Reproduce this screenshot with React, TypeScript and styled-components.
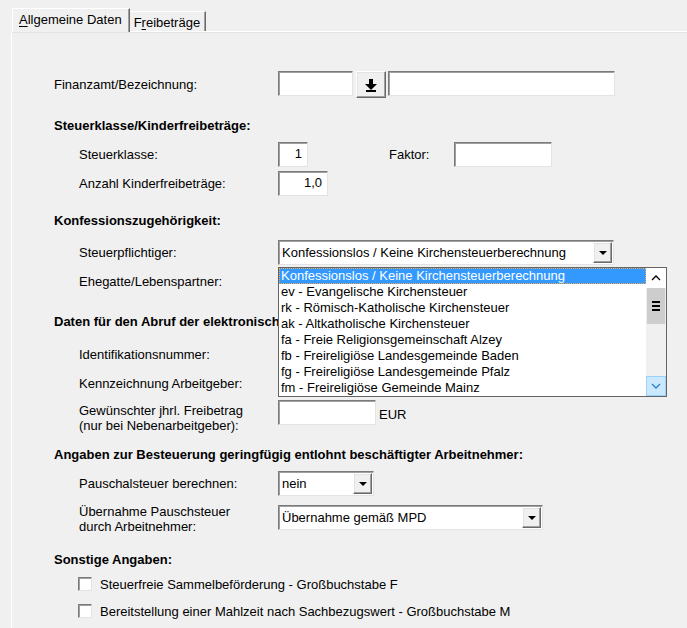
import React from 'react';
import styled, {createGlobalStyle, css} from 'styled-components';

const LABEL_COLUMN_WIDTH = 224;

const KONFESSIONEN = [
  'Konfessionslos / Keine Kirchensteuerberechnung',
  'ev - Evangelische Kirchensteuer',
  'rk - Römisch-Katholische Kirchensteuer',
  'ak - Altkatholische Kirchensteuer',
  'fa - Freie Religionsgemeinschaft Alzey',
  'fb - Freireligiöse Landesgemeinde Baden',
  'fg - Freireligiöse Landesgemeinde Pfalz',
  'fm - Freireligiöse Gemeinde Mainz',
];

const DownloadIcon = () => (
  <svg width="12" height="14" viewBox="0 0 12 14">
    <rect x="4" y="1" width="4" height="5" fill="#000" />
    <polygon points="0,6 12,6 6,12" fill="#000" />
    <rect x="1" y="12" width="10" height="2" fill="#000" />
  </svg>
);

const Chevron = ({up, color}: {up?: boolean; color: string}) => (
  <svg width="10" height="6" viewBox="0 0 10 6">
    <polyline
      points={up ? '1,5 5,1 9,5' : '1,1 5,5 9,1'}
      fill="none"
      stroke={color}
      strokeWidth="1.3"
    />
  </svg>
);

const ComboBox = ({value, width}: {value: string; width: number}) => (
  <Combo $width={width}>
    <ComboText>{value}</ComboText>
    <ComboButton>
      <Triangle />
    </ComboButton>
  </Combo>
);

export default function App() {
  return (
    <Window>
      <GlobalStyle />
      <TabBar>
        <Tab $active>
          <u>A</u>llgemeine Daten
        </Tab>
        <Tab>
          F<u>r</u>eibeträge
        </Tab>
      </TabBar>

      <Pane>
        <Row $mt={39} $h={27}>
          <Label>Finanzamt/Bezeichnung:</Label>
          <Fields>
            <TextBox $width={75} />
            <IconButton>
              <DownloadIcon />
            </IconButton>
            <TextBox $width={227} />
          </Fields>
        </Row>

        <Heading $mt={20}>Steuerklasse/Kinderfreibeträge:</Heading>
        <Row $mt={8}>
          <Label $indent>Steuerklasse:</Label>
          <Fields>
            <TextBox $width={30}>1</TextBox>
            <InlineLabel>Faktor:</InlineLabel>
            <TextBox $width={98} />
          </Fields>
        </Row>
        <Row $mt={4}>
          <Label $indent>Anzahl Kinderfreibeträge:</Label>
          <Fields>
            <TextBox $width={50}>1,0</TextBox>
          </Fields>
        </Row>

        <Heading $mt={17}>Konfessionszugehörigkeit:</Heading>
        <Row $mt={11}>
          <Label $indent>Steuerpflichtiger:</Label>
          <Fields>
            <DropdownAnchor>
              <ComboBox value={KONFESSIONEN[0]} width={336} />
              <DropdownList>
                <Items>
                  {KONFESSIONEN.map((k, i) => (
                    <Item key={k} $selected={i === 0}>
                      {k}
                    </Item>
                  ))}
                </Items>
                <ScrollBar>
                  <ScrollArrow>
                    <Chevron up color="#000" />
                  </ScrollArrow>
                  <Thumb>
                    <Grip />
                    <Grip />
                    <Grip />
                  </Thumb>
                  <Track />
                  <ScrollArrow $hover>
                    <Chevron color="#2a7fd0" />
                  </ScrollArrow>
                </ScrollBar>
              </DropdownList>
            </DropdownAnchor>
          </Fields>
        </Row>
        <Row $mt={4}>
          <Label $indent>Ehegatte/Lebenspartner:</Label>
          <Fields>
            <ComboBox value="" width={336} />
          </Fields>
        </Row>

        <Heading $mt={20} $clip>
          Daten für den Abruf der elektronischen Lohnsteuerabzugsmerkmale:
        </Heading>
        <Row $mt={12}>
          <Label $indent>Identifikationsnummer:</Label>
          <Fields>
            <TextBox $width={120} />
          </Fields>
        </Row>
        <Row $mt={4}>
          <Label $indent>Kennzeichnung Arbeitgeber:</Label>
          <Fields>
            <ComboBox value="" width={265} />
          </Fields>
        </Row>
        <Row $mt={4} $h={31} $top>
          <Label $indent $twoLines>
            Gewünschter jhrl. Freibetrag
            <br />
            (nur bei Nebenarbeitgeber):
          </Label>
          <Fields>
            <TextBox $width={98} />
            <Unit>EUR</Unit>
          </Fields>
        </Row>

        <Heading $mt={16}>
          Angaben zur Besteuerung geringfügig entlohnt beschäftigter
          Arbeitnehmer:
        </Heading>
        <Row $mt={8}>
          <Label $indent>Pauschalsteuer berechnen:</Label>
          <Fields>
            <ComboBox value="nein" width={96} />
          </Fields>
        </Row>
        <Row $mt={5} $top>
          <Label $indent $twoLines>
            Übernahme Pauschsteuer
            <br />
            durch Arbeitnehmer:
          </Label>
          <Fields>
            <ComboBox value="Übernahme gemäß MPD" width={265} />
          </Fields>
        </Row>

        <Heading $mt={26}>Sonstige Angaben:</Heading>
        <CheckRow $mt={7}>
          <CheckBox />
          Steuerfreie Sammelbeförderung - Großbuchstabe F
        </CheckRow>
        <CheckRow $mt={9}>
          <CheckBox />
          Bereitstellung einer Mahlzeit nach Sachbezugswert - Großbuchstabe M
        </CheckRow>
      </Pane>
    </Window>
  );
}

const GlobalStyle = createGlobalStyle`
  body {
    margin: 0;
    background: #f0f0f0;
    font-family: "Liberation Sans", Arial, sans-serif;
    font-size: 13px;
    color: #000;
  }
`;

const sunken = css`
  box-sizing: border-box;
  background: #fff;
  border: 1px solid;
  border-color: #7a7a7a #e3e3e3 #e3e3e3 #7a7a7a;
  box-shadow: inset 1px 1px 0 #a0a0a0;
`;

const raised = css`
  box-sizing: border-box;
  background: #f0f0f0;
  border: 1px solid;
  border-color: #fff #696969 #696969 #fff;
  box-shadow: inset -1px -1px 0 #a0a0a0, inset 1px 1px 0 #e3e3e3;
`;

const Window = styled.div`
  width: 687px;
  height: 628px;
  overflow: hidden;
  display: flex;
  flex-direction: column;
`;

const TabBar = styled.div`
  height: 31px;
  display: flex;
  align-items: flex-end;
  padding-left: 12px;
  position: relative;
  z-index: 1;
`;

const Tab = styled.div<{$active?: boolean}>`
  box-sizing: border-box;
  display: flex;
  align-items: center;
  background: #f0f0f0;
  border-top: 1px solid #fff;
  border-right: 1px solid #696969;
  box-shadow: inset -1px 0 0 #a0a0a0;
  ${({$active}) =>
    $active
      ? css`
          height: 24px;
          margin-bottom: -1px;
          padding: 0 7px 2px 6px;
          border-left: 1px solid #fff;
        `
      : css`
          height: 20px;
          padding: 1px 5px 0 4px;
        `}
  u {
    text-decoration-thickness: 1px;
    text-underline-offset: 2px;
  }
`;

const Pane = styled.div`
  flex: 1;
  margin-left: 11px;
  border-left: 1px solid #fff;
  border-top: 1px solid #fff;
  box-shadow: inset 0 1px 0 #e3e3e3;
  padding-left: 42px;
  display: flex;
  flex-direction: column;
`;

const Row = styled.div<{$mt: number; $h?: number; $top?: boolean}>`
  margin-top: ${({$mt}) => $mt}px;
  height: ${({$h}) => $h ?? 25}px;
  display: grid;
  grid-template-columns: ${LABEL_COLUMN_WIDTH}px 1fr;
  align-items: ${({$top}) => ($top ? 'start' : 'center')};
`;

const Label = styled.div<{$indent?: boolean; $twoLines?: boolean}>`
  padding-left: ${({$indent}) => ($indent ? 25 : 0)}px;
  white-space: nowrap;
  line-height: 15px;
  ${({$twoLines}) =>
    $twoLines &&
    css`
      padding-top: 3px;
    `}
`;

const Fields = styled.div`
  display: flex;
  align-items: center;
  height: 100%;
`;

const Heading = styled.div<{$mt: number; $clip?: boolean}>`
  margin-top: ${({$mt}) => $mt}px;
  height: 16px;
  line-height: 16px;
  font-weight: bold;
  white-space: nowrap;
  ${({$clip}) =>
    $clip &&
    css`
      width: ${LABEL_COLUMN_WIDTH}px;
      overflow: hidden;
    `}
`;

const TextBox = styled.div<{$width: number}>`
  ${sunken};
  width: ${({$width}) => $width}px;
  height: 25px;
  line-height: 21px;
  text-align: right;
  padding-right: 5px;
  align-self: flex-start;
`;

const InlineLabel = styled.span`
  width: 65px;
  margin-left: 81px;
`;

const Unit = styled.span`
  margin-left: 3px;
  align-self: center;
  margin-top: -4px;
`;

const IconButton = styled.div`
  ${raised};
  width: 30px;
  height: 27px;
  margin: 0 2px 0 3px;
  display: flex;
  align-items: center;
  justify-content: center;
  padding-top: 1px;
`;

const Combo = styled.div<{$width: number}>`
  ${sunken};
  width: ${({$width}) => $width}px;
  height: 25px;
  display: flex;
  align-items: center;
  padding: 1px 1px 1px 3px;
`;

const ComboText = styled.div`
  flex: 1;
  white-space: nowrap;
  overflow: hidden;
`;

const ComboButton = styled.div`
  ${raised};
  width: 19px;
  height: 21px;
  display: flex;
  align-items: center;
  justify-content: center;
`;

const Triangle = styled.div`
  width: 0;
  height: 0;
  border-left: 4px solid transparent;
  border-right: 4px solid transparent;
  border-top: 4px solid #000;
  margin-top: 1px;
`;

const DropdownAnchor = styled.div`
  position: relative;
`;

const DropdownList = styled.div`
  position: absolute;
  top: 27px;
  left: 0;
  width: 389px;
  height: 130px;
  box-sizing: border-box;
  border: 1px solid #646464;
  background: #fff;
  display: flex;
  z-index: 2;
`;

const Items = styled.div`
  flex: 1;
  display: flex;
  flex-direction: column;
`;

const Item = styled.div<{$selected?: boolean}>`
  height: 16px;
  line-height: 16px;
  padding-left: 2px;
  white-space: nowrap;
  ${({$selected}) =>
    $selected &&
    css`
      background: #3399ff;
      color: #fff;
      outline: 1px dotted #f3a94a;
      outline-offset: -1px;
    `}
`;

const ScrollBar = styled.div`
  width: 20px;
  display: flex;
  flex-direction: column;
  background: #f0f0f0;
`;

const ScrollArrow = styled.div<{$hover?: boolean}>`
  box-sizing: border-box;
  height: 20px;
  display: flex;
  align-items: center;
  justify-content: center;
  background: ${({$hover}) => ($hover ? '#cce8ff' : '#fff')};
  border: 1px solid ${({$hover}) => ($hover ? '#99d1ff' : '#fff')};
`;

const Thumb = styled.div`
  height: 36px;
  margin: 0 1px;
  background: #cdcdcd;
  display: flex;
  flex-direction: column;
  align-items: center;
  justify-content: center;
  gap: 2px;
`;

const Grip = styled.div`
  width: 8px;
  height: 2px;
  background: #000;
`;

const Track = styled.div`
  flex: 1;
`;

const CheckRow = styled.div<{$mt: number}>`
  margin-top: ${({$mt}) => $mt}px;
  height: 18px;
  display: flex;
  align-items: center;
  padding-left: 24px;
  white-space: nowrap;
`;

const CheckBox = styled.div`
  ${sunken};
  width: 14px;
  height: 14px;
  margin-right: 8px;
`;
